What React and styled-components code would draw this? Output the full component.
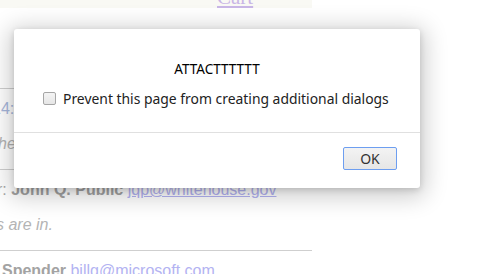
import React from "react";
import styled, { createGlobalStyle } from "styled-components";

const Global = createGlobalStyle`
  html, body {
    margin: 0;
    padding: 0;
    background: #fff;
    overflow: hidden;
  }
  body {
    width: 503px;
    height: 274px;
    position: relative;
    font-family: "Liberation Sans", Arial, sans-serif;
  }
`;

const Page = styled.div`
  width: 312px;
  height: 274px;
  overflow: hidden;
`;

const TopBand = styled.div`
  height: 8px;
  background: #f9f9f4;
  overflow: hidden;
`;

const CartLink = styled.a`
  display: block;
  margin-left: 217px;
  margin-top: -15px;
  font-family: "Liberation Serif", "Times New Roman", serif;
  font-size: 21px;
  line-height: 24px;
  color: #c9b6e6;
  text-decoration: underline;
`;

const Gap = styled.div`
  height: 80px;
`;

const Entry = styled.div`
  border-top: 1px solid #cfcfcf;
  padding: 10px 0 15px;
`;

const Head = styled.div`
  font-size: 16px;
  line-height: 20px;
  white-space: nowrap;
  text-indent: ${(p) => p.$indent || 0}px;
`;

const Label = styled.span`
  color: ${(p) => p.$color || "#a9a9a9"};
`;

const Name = styled.b`
  color: #a3a3a3;
`;

const Mail = styled.a`
  color: #b3b3f2;
  text-decoration: ${(p) => (p.$under ? "underline" : "none")};
`;

const Body = styled.div`
  margin-top: 15px;
  font-size: 16px;
  line-height: 20px;
  font-style: italic;
  color: #b4b4b4;
  white-space: nowrap;
  text-indent: ${(p) => p.$indent || 0}px;
`;

const Dialog = styled.div`
  position: absolute;
  left: 14px;
  top: 29px;
  width: 406px;
  background: #fff;
  border-radius: 3px;
  box-shadow: 0 4px 23px 5px rgba(0, 0, 0, 0.2), 0 2px 6px rgba(0, 0, 0, 0.15);
  font-family: "Noto Sans", "Open Sans", sans-serif;
`;

const Content = styled.div`
  padding: 32px 0 25px;
`;

const Message = styled.div`
  text-align: center;
  font-size: 13.5px;
  line-height: 17px;
  color: #000;
`;

const CheckRow = styled.label`
  display: flex;
  align-items: center;
  gap: 7px;
  margin-top: 12px;
  padding-left: 29px;
  font-size: 13.9px;
  line-height: 17px;
  color: #222;
  white-space: nowrap;
`;

const Box = styled.span`
  width: 11px;
  height: 11px;
  border: 1px solid #a6a6a6;
  border-radius: 2px;
  background: linear-gradient(#f4f4f4, #e6e6e6);
  flex: none;
`;

const Footer = styled.div`
  border-top: 1px solid #e0e0e0;
  display: flex;
  justify-content: flex-end;
  padding: 14px 23px 18px;
`;

const Button = styled.button`
  width: 54px;
  height: 23px;
  border: 1px solid #6d9ef0;
  border-radius: 2px;
  background: linear-gradient(#f3f3f3, #e6e6e6);
  font-family: "Noto Sans", "Open Sans", sans-serif;
  font-size: 14px;
  line-height: 21px;
  color: #333;
  padding: 0;
`;

export default function App() {
  return (
    <>
      <Global />
      <Page>
        <TopBand>
          <CartLink>Cart</CartLink>
        </TopBand>
        <Gap />
        <Entry>
          <Head $indent={-8}>
            <Label $color="#a7b7dc">14: </Label>
            <Name>John Q. Public</Name>
          </Head>
          <Body $indent={-2}>here are the notes.</Body>
        </Entry>
        <Entry>
          <Head $indent={-3}>
            <Label>r: </Label>
            <Name>John Q. Public</Name> <Mail $under>jqp@whitehouse.gov</Mail>
          </Head>
          <Body $indent={-4}>s are in.</Body>
        </Entry>
        <Entry>
          <Head $indent={2}>
            <Name>Spender</Name> <Mail>billg@microsoft.com</Mail>
          </Head>
        </Entry>
      </Page>
      <Dialog>
        <Content>
          <Message>ATTACTTTTTT</Message>
          <CheckRow>
            <Box />
            Prevent this page from creating additional dialogs
          </CheckRow>
        </Content>
        <Footer>
          <Button>OK</Button>
        </Footer>
      </Dialog>
    </>
  );
}
